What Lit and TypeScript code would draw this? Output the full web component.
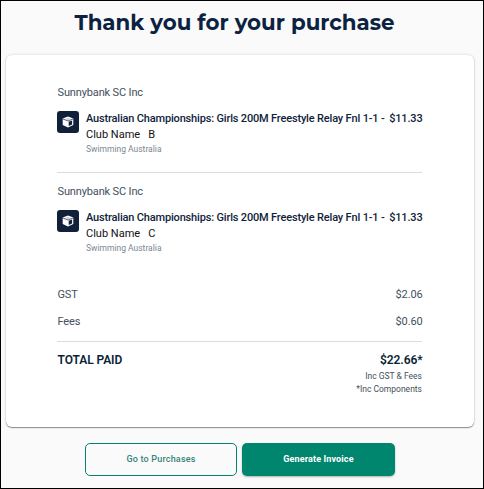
import { LitElement, html, css } from "lit";
import { customElement, property } from "lit/decorators.js";

@customElement("purchase-item")
class PurchaseItem extends LitElement {
  @property() club = "";
  static styles = css`
    :host { display: block; }
    .org { padding-left: 0.5px; font-size: 11px; line-height: 16px; color: #44505c; letter-spacing: -0.14px; }
    .row { display: flex; margin-top: 10px; }
    .icon { flex: none; width: 22px; height: 22px; border-radius: 3px; background: #10203b; display: flex; align-items: center; justify-content: center; margin-right: 7px; }
    .icon svg { display: block; }
    .info { flex: 1; min-width: 0; white-space: nowrap; }
    .title, .price { font-size: 11px; line-height: 16px; color: #10233b; font-weight: 500; letter-spacing: -0.17px; }
    .price { margin-right: -0.5px; }
    .club { color: #111; font-weight: 400; font-size: 11px; line-height: 16px; letter-spacing: 0; white-space: pre; }
    .sub { font-size: 8.5px; line-height: 12px; color: #7b8894; }
  `;
  render() {
    return html`
      <div class="org">Sunnybank SC Inc</div>
      <div class="row">
        <div class="icon">
          <svg width="12" height="12" viewBox="0 0 12 12">
            <path d="M6 0.5 L11.3 2.6 V9.1 L6 11.5 L0.7 9.1 V2.6 Z" fill="#fff" />
            <path d="M3.2 2.9 L6 1.9 L8.8 2.9 L6 4 Z" fill="#10203b" opacity=".25" />
            <path d="M1 3 L6 5 L11 3" fill="none" stroke="#10203b" stroke-width=".7" />
            <path d="M6.7 5.7 L10.1 4.4 V8.4 L6.7 9.9 Z" fill="#10203b" />
          </svg>
        </div>
        <div class="info">
          <div class="title">Australian Championships: Girls 200M Freestyle Relay Fnl 1-1 -</div>
          <div class="club">Club Name   ${this.club}</div>
          <div class="sub">Swimming Australia</div>
        </div>
        <div class="price">$11.33</div>
      </div>
    `;
  }
}

@customElement("app-root")
class AppRoot extends LitElement {
  static styles = css`
    :host { display: block; font-family: Roboto, "Liberation Sans", sans-serif; }
    .frame { box-sizing: border-box; width: 484px; height: 489px; border: 1px solid #000; background: #fafafa; overflow: hidden; }
    h1 { margin: 5px 0 0; height: 32px; line-height: 32px; text-align: center; font-family: Montserrat, Inter, sans-serif; font-size: 21.33px; font-weight: 700; color: #0b2341; white-space: nowrap; padding-right: 15px; }
    .card { box-sizing: border-box; width: 468px; height: 372px; margin: 17px 0 0 5px; padding: 30px 52px 0 51px; background: #fff; border-radius: 6px; box-shadow: 0 1px 1px rgba(0,0,0,.4), 0 0 3px rgba(0,0,0,.16); }
    hr { height: 1px; border: 0; margin: 0; background: #dcdcdc; }
    .second { margin-top: 11px; }
    .first { height: 87px; }
    .line { display: flex; justify-content: space-between; margin: 0 -0.5px 0 0.5px; font-size: 11px; line-height: 16px; color: #44505c; letter-spacing: -.14px; }
    .gst { margin-top: 16px; }
    .fees { margin-top: 11px; margin-bottom: 11px; }
    .total { margin-top: 10px; font-size: 12px; font-weight: 600; color: #0b1f38; letter-spacing: -.08px; }
    .notes { text-align: right; font-size: 8.5px; line-height: 13px; color: #44505c; margin-top: 2px; }
    .actions { display: flex; gap: 5px; margin: 16px 0 0 84px; }
    button { box-sizing: border-box; width: 152px; height: 33px; border-radius: 5px; font: 500 9px/1 Roboto, sans-serif; padding: 0; letter-spacing: .2px; }
    .outline { background: #fafafa; border: 1px solid #00856f; color: #36847a; }
    .solid { width: 153px; background: #00856f; border: 0; color: #fff; font-weight: 700; letter-spacing: .13px; box-shadow: 0 1px 2px rgba(0,0,0,.3); }
  `;
  render() {
    return html`
      <div class="frame">
        <h1>Thank you for your purchase</h1>
        <div class="card">
          <purchase-item class="first" club="B"></purchase-item>
          <hr />
          <purchase-item class="first second" club="C"></purchase-item>
          <div class="line gst"><span>GST</span><span>$2.06</span></div>
          <div class="line fees"><span>Fees</span><span>$0.60</span></div>
          <hr />
          <div class="line total"><span>TOTAL PAID</span><span>$22.66*</span></div>
          <div class="notes"><div>Inc GST &amp; Fees</div><div>*Inc Components</div></div>
        </div>
        <div class="actions">
          <button class="outline">Go to Purchases</button>
          <button class="solid">Generate Invoice</button>
        </div>
      </div>
    `;
  }
}
